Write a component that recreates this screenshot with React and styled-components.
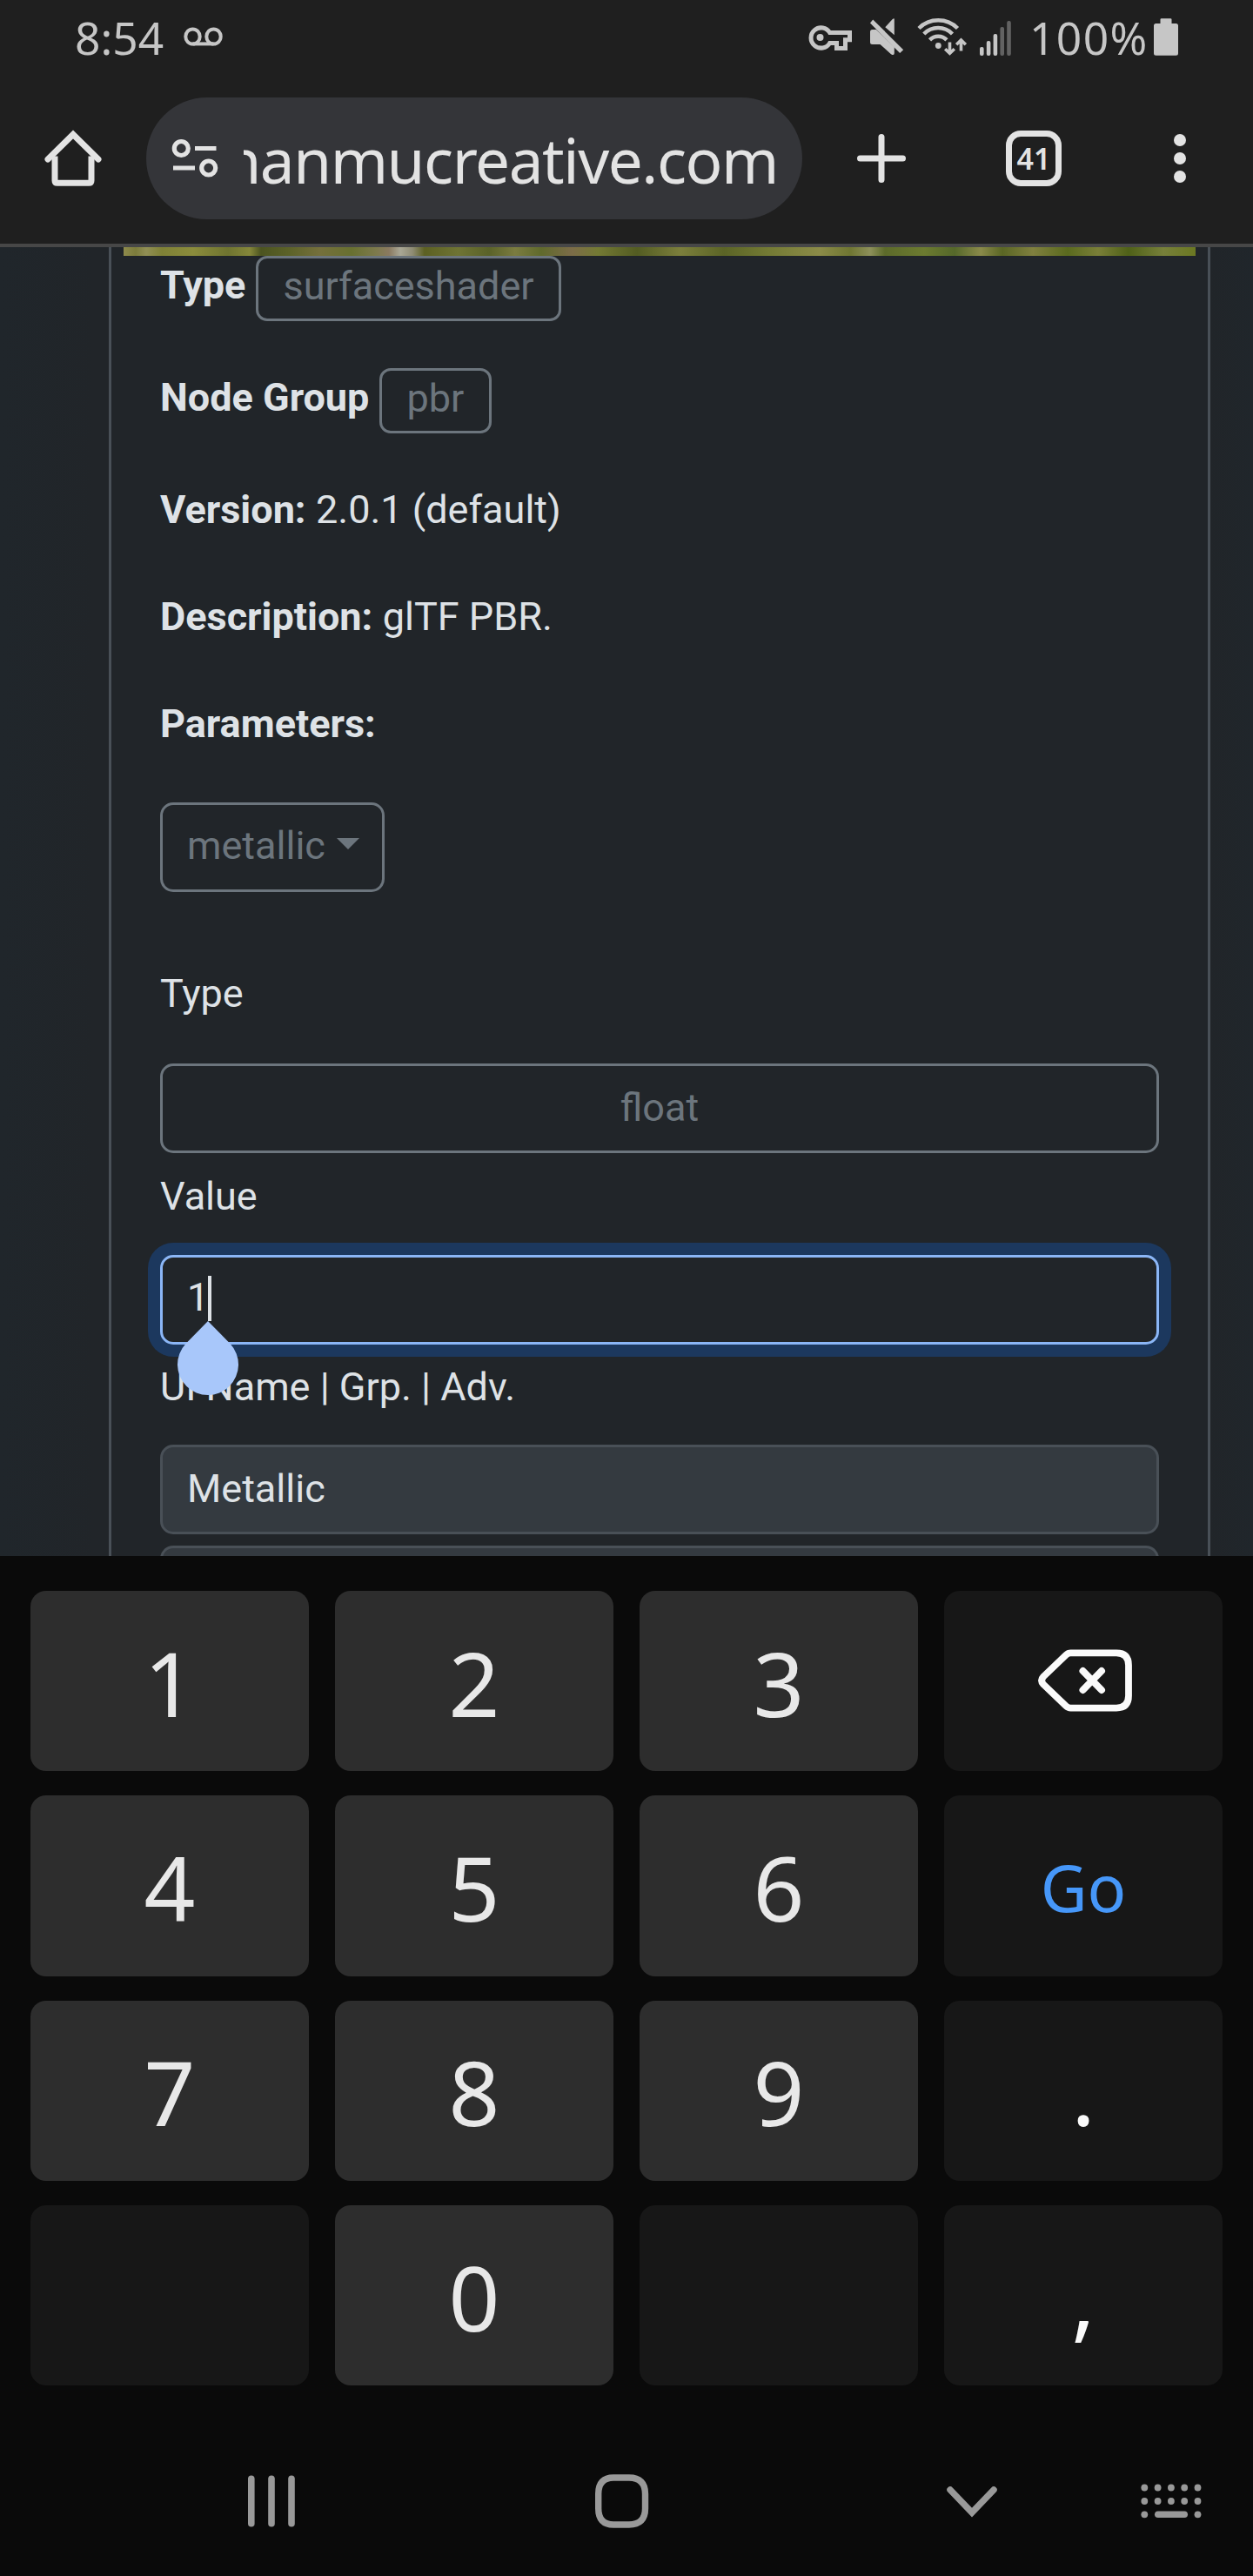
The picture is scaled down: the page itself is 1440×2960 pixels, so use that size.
import React from "react";
import styled, { createGlobalStyle } from "styled-components";

const Global = createGlobalStyle`
  *, *::before, *::after { box-sizing: border-box; }
  html, body { margin: 0; padding: 0; background: #0a0a0a; }
  button, input { font: inherit; margin: 0; }
`;

const Screen = styled.div`
  width: 1440px;
  height: 2960px;
  display: flex;
  flex-direction: column;
  overflow: hidden;
  background: #0a0a0a;
  font-family: Roboto, "Liberation Sans", sans-serif;
`;

/* ---------- status bar ---------- */

const StatusBar = styled.header`
  height: 84px;
  flex: none;
  display: flex;
  align-items: flex-start;
  padding: 8px 86px 0 86px;
  background: #1f1f1f;
  color: #c6c6c6;
  font-family: "Noto Sans", sans-serif;
  font-size: 51.5px;
  line-height: 71px;
`;

const Clock = styled.span`
  width: 125px;
  flex: none;
`;

const StatusIcons = styled.div`
  display: flex;
  margin-left: auto;
`;

const Percent = styled.span`
  width: 143px;
  margin-left: 17px;
  text-align: left;
  letter-spacing: 1.4px;
`;

const Icon = styled.svg`
  display: block;
  flex: none;
  margin: ${(p) => p.$margin || 0};
`;

/* ---------- browser toolbar ---------- */

const Toolbar = styled.div`
  height: 200px;
  flex: none;
  display: flex;
  align-items: flex-start;
  padding-top: 28px;
  background: #1f1f1f;
  border-bottom: 4px solid #474747;
`;

const ToolButton = styled.button`
  width: ${(p) => p.$width}px;
  height: 140px;
  flex: none;
  padding: 0;
  border: 0;
  background: none;
  color: #e3e3e3;
  display: flex;
  align-items: center;
  justify-content: center;
`;

const AddressPill = styled.div`
  width: 754px;
  height: 140px;
  flex: none;
  border-radius: 70px;
  background: #343539;
  display: flex;
  align-items: center;
  padding: 0 28px 0 28px;
  gap: 28px;
`;

const UrlClip = styled.div`
  flex: 1;
  min-width: 0;
  height: 140px;
  overflow: hidden;
  display: flex;
  justify-content: flex-end;
`;

const Url = styled.span`
  flex: none;
  white-space: nowrap;
  font-family: "Noto Sans", sans-serif;
  font-size: 71px;
  line-height: 143px;
  letter-spacing: -1.45px;
  color: #e3e3e3;
`;

const TabCount = styled.span`
  width: 64px;
  height: 64px;
  border: 7px solid #e3e3e3;
  border-radius: 17px;
  display: flex;
  align-items: center;
  justify-content: center;
  font-family: "Noto Sans", sans-serif;
  font-weight: 600;
  font-size: 34px;
  line-height: 50px;
  color: #e3e3e3;
`;

/* ---------- page ---------- */

const Page = styled.main`
  height: 1504px;
  flex: none;
  overflow: hidden;
  background: linear-gradient(90deg, #20262b, #212529 110px, #212529 1390px, #20262b);
  padding: 0 49px 0 125px;
`;

const Card = styled.section`
  height: 1504px;
  border: solid #495057;
  border-width: 0 3px;
  background: #212529;
  overflow: hidden;
`;

const PhotoEdge = styled.div`
  height: 10px;
  margin: 0 14px;
  background: linear-gradient(
    90deg,
    #8e8a4c 0, #7c7c3c 14px, #918f55 26px, #7f8136 44px, #8b8c3c 80px,
    #6f7430 120px, #85873a 145px, #4c5420 158px, #5c6228 190px, #75703c 225px,
    #687030 262px, #7d7a4c 290px, #8a7a60 305px, #a9a795 318px, #8f8c74 332px,
    #5c6022 346px, #6f7434 385px, #5a6228 420px, #7b7c40 450px, #606a2c 480px,
    #7c6c48 515px, #747a34 545px, #535c22 590px, #7c7f3c 640px, #5b6426 690px,
    #737a34 740px, #8b8b48 800px, #6f7632 835px, #8d905a 858px, #5c6a2a 875px,
    #6c7b30 920px, #55682a 955px, #8a8a4a 985px, #5a6624 1010px, #80803f 1045px,
    #5a6a1e 1085px, #7a7f38 1120px, #4f6118 1155px, #77803a 1195px, #6b7822 1232px
  );
`;

const Form = styled.div`
  padding: 0 56px;
  color: #dee2e6;
  font-size: 45px;
`;

const Row = styled.p`
  display: flex;
  align-items: flex-start;
  gap: 11.5px;
  height: 68px;
  margin: ${(p) => p.$top || 0}px 0 0;
  line-height: 68px;
  white-space: nowrap;
`;

const Label = styled.strong`
  font-weight: 700;
`;

const Badge = styled.span`
  flex: none;
  height: 75px;
  border: 3px solid #6c757d;
  border-radius: 13px;
  padding: 0 28.5px;
  line-height: 63px;
  color: #6c757d;
`;

const OutlineButton = styled.button`
  display: flex;
  align-items: flex-start;
  justify-content: ${(p) => (p.$wide ? "center" : "flex-start")};
  gap: 13px;
  width: ${(p) => (p.$wide ? "100%" : "258px")};
  height: 103px;
  margin-top: ${(p) => p.$top}px;
  padding: 0 28px;
  border: 3px solid #6c757d;
  border-radius: 15px;
  background: transparent;
  color: #6c757d;
  line-height: ${(p) => (p.$wide ? 95 : 93)}px;
`;

const Caret = styled.span`
  margin-top: 38px;
  border: solid transparent;
  border-width: 13px 13px 0;
  border-top-color: #6c757d;
`;

const Field = styled.div`
  position: relative;
  display: flex;
  height: 103px;
  margin-top: ${(p) => p.$top}px;
  padding: 0 28px;
  border: 3px solid ${(p) => (p.$focus ? "#8bb6f6" : "#495057")};
  border-radius: 15px;
  background: ${(p) => (p.$focus ? "#212529" : "#343a40")};
  box-shadow: ${(p) => (p.$focus ? "0 0 0 14px #1c385e" : "none")};
  line-height: ${(p) => (p.$focus ? 92 : 95)}px;
`;

const TextCaret = styled.span`
  width: 4px;
  height: 52px;
  margin: 21px 0 0 -1px;
  background: #dee2e6;
`;

const CaretHandle = styled.svg`
  position: absolute;
  z-index: 2;
  left: 17px;
  top: 73px;
`;

/* ---------- keyboard ---------- */

const Keyboard = styled.div`
  flex: none;
  height: 954px;
  padding: 40px 35px 0;
  display: grid;
  grid-template-columns: repeat(4, 320px);
  grid-template-rows: repeat(4, 207.4px);
  gap: 27.97px 30px;
  font-family: "Noto Sans", sans-serif;
`;

const Key = styled.button`
  padding: 3px 0 0;
  border: 0;
  border-radius: 18px;
  background: ${(p) => (p.$dark ? "#171717" : "#2d2d2d")};
  color: ${(p) => p.$color || (p.$dark ? "#fafafa" : "#e8e8e8")};
  font-size: ${(p) => p.$size || 103}px;
  font-weight: 430;
  line-height: 205px;
  display: flex;
  align-items: center;
  justify-content: center;
`;

const NavBar = styled.nav`
  flex: 1;
  display: grid;
  grid-template-columns: 284px 400px 402px 222px 1fr;
  align-items: center;
  padding: 45px 0 0;
  height: 218px;
`;

const NavItem = styled.button`
  height: 68px;
  padding: 0;
  border: 0;
  background: none;
  display: flex;
  align-items: center;
  color: #999999;
`;

function VoicemailIcon() {
  return (
    <Icon $margin="23px 0 0" width="46" height="24" viewBox="0 0 46 24" fill="none" stroke="currentColor" strokeWidth="4">
      <ellipse cx="10.5" cy="11" rx="8.2" ry="8.6" />
      <ellipse cx="34.5" cy="11" rx="8.2" ry="8.6" />
      <path d="M10.5 19.4h24" />
    </Icon>
  );
}

function StatusGlyphs() {
  return (
    <Icon width="242" height="56" viewBox="924 8 242 56" fill="#c6c6c6">
      <path
        d="M953.6 37.6A11.6 11.6 0 1 0 953.6 49.4L961.5 49.4V55.5H971.5V45.8H976.5V37.6Z"
        fill="none" stroke="#c6c6c6" strokeWidth="5"
      />
      <circle cx="942.5" cy="43" r="4" />
      <path d="M1027.8 21.5V40.3L1017.3 31.2L1025.5 22.3Q1027.8 20.5 1027.8 22Z" />
      <path d="M1007 34H1002.5Q1000 34 1000 36.5V48.5Q1000 51 1002.5 51H1011.5L1024 62.2Q1027.8 64.5 1027.8 61V54Z" />
      <path d="M1003.2 22.4L1038.2 57.2L1034.2 61L1000 26.5Z" />
      <g fill="none" stroke="#c6c6c6" strokeWidth="4.5">
        <path d="M1056 32.5A31.5 31.5 0 0 1 1100.5 32.5" />
        <path d="M1061.8 39A22.8 22.8 0 0 1 1094.5 39" />
        <path d="M1068.5 45.8A13.8 13.8 0 0 1 1088 45.8" />
      </g>
      <circle cx="1078.3" cy="52.5" r="3.4" />
      <g fill="none" stroke="#c6c6c6" strokeWidth="3.6">
        <path d="M1091.5 48.5V61M1086.2 56.2L1091.5 61.2L1096.8 56.2" />
        <path d="M1104.5 58.5V46M1099.2 51.2L1104.5 46L1109.8 51.2" />
      </g>
      <rect x="1126" y="54" width="4.6" height="10" rx="2" />
      <rect x="1133.8" y="47" width="4.6" height="17" rx="2" />
      <rect x="1141.6" y="39" width="4.6" height="25" rx="2" />
      <rect x="1149.4" y="31" width="4.6" height="33" rx="2" fill="#626262" />
      <rect x="1157.2" y="24" width="4.6" height="40" rx="2" fill="#626262" />
    </Icon>
  );
}

function BatteryIcon() {
  return (
    <Icon width="28" height="56" viewBox="0 8 28 56" fill="currentColor">
      <path d="M7.5 27V22.5Q7.5 21.3 8.7 21.3H19.3Q20.5 21.3 20.5 22.5V27H25.5Q28 27 28 29.5V61.2Q28 63.7 25.5 63.7H2.5Q0 63.7 0 61.2V29.5Q0 27 2.5 27Z" />
    </Icon>
  );
}

function HomeIcon() {
  return (
    <Icon width="66" height="66" viewBox="51 149 66 66" fill="none" stroke="currentColor" strokeWidth="7">
      <path d="M63 179.5V207.5Q63 210.3 65.8 210.3H102.2Q105 210.3 105 207.5V179.5" />
      <path d="M55 183L84 154.5L113 183" strokeLinecap="round" />
    </Icon>
  );
}

function TuneIcon() {
  return (
    <Icon width="56" height="46" viewBox="196 159 56 46" fill="none" stroke="#e3e3e3" strokeWidth="5.2">
      <circle cx="208.3" cy="170.5" r="8" />
      <circle cx="239.7" cy="193" r="8" />
      <path d="M224 170.5H248.5M199 193H224" />
    </Icon>
  );
}

function BackspaceIcon() {
  return (
    <Icon $margin="-4px 0 0 3px" width="110" height="72" viewBox="0 0 110 72" fill="none" stroke="currentColor" strokeWidth="8" strokeLinecap="round" strokeLinejoin="round">
      <path d="M38.5 4.4H91Q105 4.4 105 18.4V53.6Q105 67.6 91 67.6H38.5Q35.5 67.6 33 65.2L7.2 40.5Q3 36 7.2 31.5L33 6.8Q35.5 4.4 38.5 4.4Z" strokeWidth="7.8" />
      <path d="M52.5 25L74 47M74 25L52.5 47" />
    </Icon>
  );
}

const KEYS = [
  { label: "1" }, { label: "2" }, { label: "3" },
  { label: "Delete", icon: true, dark: true },
  { label: "4" }, { label: "5" }, { label: "6" },
  { label: "Go", dark: true, color: "#4697f9", size: 74 },
  { label: "7" }, { label: "8" }, { label: "9" },
  { label: ".", dark: true },
  { label: "", dark: true },
  { label: "0" },
  { label: "", dark: true },
  { label: ",", dark: true },
];

export default function App() {
  return (
    <Screen>
      <Global />
      <StatusBar>
        <Clock>8:54</Clock>
        <VoicemailIcon />
        <StatusIcons>
          <StatusGlyphs />
          <Percent>100%</Percent>
          <BatteryIcon />
        </StatusIcons>
      </StatusBar>

      <Toolbar>
        <ToolButton $width={168} aria-label="Home"><HomeIcon /></ToolButton>
        <AddressPill>
          <TuneIcon />
          <UrlClip><Url>hanmucreative.com</Url></UrlClip>
        </AddressPill>
        <ToolButton $width={182} aria-label="New tab">
          <Icon width="56" height="56" viewBox="0 0 56 56" stroke="currentColor" strokeWidth="7" strokeLinecap="round">
            <path d="M28 3.5V52.5M3.5 28H52.5" />
          </Icon>
        </ToolButton>
        <ToolButton $width={168} aria-label="Tabs"><TabCount>41</TabCount></ToolButton>
        <ToolButton $width={168} aria-label="Menu">
          <Icon width="14" height="56" viewBox="0 0 14 56" fill="currentColor">
            <circle cx="7" cy="7" r="7" /><circle cx="7" cy="28" r="7" /><circle cx="7" cy="49" r="7" />
          </Icon>
        </ToolButton>
      </Toolbar>

      <Page>
        <Card>
          <PhotoEdge />
          <Form>
            <Row><Label>Type</Label><Badge>surfaceshader</Badge></Row>
            <Row $top={61}><Label>Node Group</Label><Badge>pbr</Badge></Row>
            <Row $top={61}><Label>Version:</Label><span>2.0.1 (default)</span></Row>
            <Row $top={55}><Label>Description:</Label><span>glTF PBR.</span></Row>
            <Row $top={55}><Label>Parameters:</Label></Row>
            <OutlineButton $top={56}>metallic<Caret /></OutlineButton>
            <Row $top={83}>Type</Row>
            <OutlineButton $wide $top={46}>float</OutlineButton>
            <Row $top={16}>Value</Row>
            <Field $focus $top={33}>
              1<TextCaret />
              <CaretHandle width="70" height="86" viewBox="0 0 70 86">
                <path d="M35 0L60.5 26A35 35 0 1 1 9.5 26Z" fill="#a8c7fa" />
              </CaretHandle>
            </Field>
            <Row $top={15}>UI Name | Grp. | Adv.</Row>
            <Field $top={32}>Metallic</Field>
            <Field $top={13} />
          </Form>
        </Card>
      </Page>

      <Keyboard>
        {KEYS.map((k, i) => (
          <Key key={i} $dark={k.dark} $color={k.color} $size={k.size} aria-label={k.label || undefined}>
            {k.icon ? <BackspaceIcon /> : k.label}
          </Key>
        ))}
      </Keyboard>

      <NavBar>
        <span />
        <NavItem aria-label="Recent apps">
          <Icon width="56" height="62" viewBox="0 0 56 62" fill="currentColor">
            <rect x="1" y="1.5" width="7.6" height="59" rx="3.8" />
            <rect x="24.2" y="1.5" width="7.6" height="59" rx="3.8" />
            <rect x="47.2" y="1.5" width="7.6" height="59" rx="3.8" />
          </Icon>
        </NavItem>
        <NavItem aria-label="Home">
          <Icon width="62" height="62" viewBox="0 0 62 62" fill="none" stroke="currentColor" strokeWidth="7.4">
            <path d="M21 4H39Q57.5 4 57.5 22.5V39.5Q57.5 58 39 58H21Q3.7 58 3.7 39.5V22.5Q3.7 4 21 4Z" />
          </Icon>
        </NavItem>
        <NavItem aria-label="Hide keyboard">
          <Icon width="62" height="40" viewBox="0 0 62 40" fill="none" stroke="currentColor" strokeWidth="7.5" strokeLinecap="round">
            <path d="M6 7L31 33L56 7" />
          </Icon>
        </NavItem>
        <NavItem aria-label="Keyboard layout">
          <Icon width="76" height="40" viewBox="0 0 76 40" fill="currentColor">
            {[0, 1, 2, 3, 4].map((c) => (
              <React.Fragment key={c}>
                <circle cx={7.3 + c * 15.3} cy="4.5" r="3.9" />
                <circle cx={7.3 + c * 15.3} cy="20" r="3.9" />
              </React.Fragment>
            ))}
            <circle cx="7.3" cy="35.3" r="3.9" />
            <rect x="19" y="31.5" width="38" height="7.6" rx="3.8" />
            <circle cx="68.5" cy="35.3" r="3.9" />
          </Icon>
        </NavItem>
      </NavBar>
    </Screen>
  );
}
